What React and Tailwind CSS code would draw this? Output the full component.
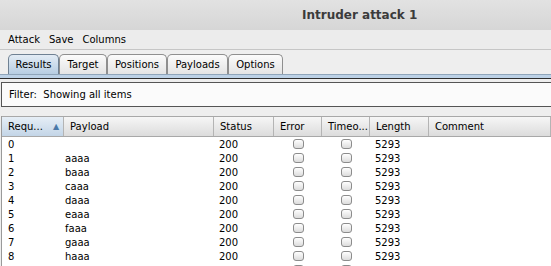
import React from 'react';

const tabs = ['Results', 'Target', 'Positions', 'Payloads', 'Options'];
const tabWidths = ['w-[51px]', 'w-[48px]', 'w-[60px]', 'w-[61px]', 'w-[55px]'];

const columns = [
  { label: 'Requ...', w: 'w-[62px]', sort: true },
  { label: 'Payload', w: 'w-[150px]' },
  { label: 'Status', w: 'w-[60px]' },
  { label: 'Error', w: 'w-[48px]' },
  { label: 'Timeo...', w: 'w-[48px]' },
  { label: 'Length', w: 'w-[59px]' },
  { label: 'Comment', w: 'flex-1' },
];

const rows = [
  ['0', ''],
  ['1', 'aaaa'],
  ['2', 'baaa'],
  ['3', 'caaa'],
  ['4', 'daaa'],
  ['5', 'eaaa'],
  ['6', 'faaa'],
  ['7', 'gaaa'],
  ['8', 'haaa'],
  ['9', 'iaaa'],
];

// small swing-style checkbox
const Check = () => (
  <span className="block w-[11px] h-[10px] rounded-[3px] border border-[#8c8c8c] bg-gradient-to-b from-white to-[#dcdcdc]" />
);

export default function App() {
  return (
    <div className="w-[551px] h-[266px] overflow-hidden bg-[#eeeeee] text-[10px] text-black font-['DejaVu_Sans',sans-serif] flex flex-col">
      {/* window title */}
      <div className="h-[30px] shrink-0 flex items-center pl-[302px] bg-gradient-to-b from-[#e2e2e2] to-[#d6d6d6]">
        <span className="text-[12px] font-bold text-[#3b3b3b]">Intruder attack 1</span>
      </div>

      {/* menu bar */}
      <div className="h-[20px] shrink-0 flex items-center gap-[9px] pl-[8px] bg-[#ececec] border-b border-[#c6c6c6]">
        <span>Attack</span>
        <span>Save</span>
        <span>Columns</span>
      </div>

      {/* tabs */}
      <div className="h-[24px] shrink-0 flex items-end pl-[8px]">
        {tabs.map((t, i) => (
          <div
            key={t}
            className={`${tabWidths[i]} h-[20px] flex items-center justify-center rounded-t-[5px] border border-b-0 ${
              i === 0
                ? 'border-[#6f8193] bg-gradient-to-b from-[#e3ecf5] to-[#b7cde2]'
                : 'border-[#8f8f8f] bg-gradient-to-b from-[#fbfbfb] to-[#e4e4e4]'
            }`}
          >
            {t}
          </div>
        ))}
      </div>
      <div className="h-[4px] shrink-0 bg-[#bcd1e6] border-t border-[#8fa5ba]" />
      <div className="h-px shrink-0 bg-[#2e2e2e]" />

      {/* filter */}
      <div className="mt-[3px] ml-[1px] h-[25px] shrink-0 flex items-center pl-[7px] bg-[#fbfbfb] border border-r-0 border-[#555555]">
        Filter:&nbsp; Showing all items
      </div>

      {/* table */}
      <div className="mt-[9px] flex-1 flex flex-col bg-white border-l border-[#9a9a9a] ml-[1px]">
        <div className="h-[21px] shrink-0 flex bg-gradient-to-b from-[#f6f6f6] to-[#dcdcdc] border-y border-[#a8a8a8]">
          {columns.map((c) => (
            <div
              key={c.label}
              className={`${c.w} shrink-0 flex items-center pl-[6px] border-r border-[#b4b4b4] ${c.sort ? 'bg-gradient-to-b from-[#e6eef6] to-[#c3d5e7]' : ''}`}
            >
              <span>{c.label}</span>
              {c.sort && <span className="ml-[10px] text-[8px] text-[#4a78a8]">▲</span>}
            </div>
          ))}
        </div>
        {rows.map(([n, p]) => (
          <div key={n} className="h-[14px] shrink-0 flex items-center">
            <div className="w-[62px] shrink-0 pl-[6px]">{n}</div>
            <div className="w-[150px] shrink-0 pl-[1px]">{p}</div>
            <div className="w-[60px] shrink-0 pl-[5px]">200</div>
            <div className="w-[48px] shrink-0 flex justify-center"><Check /></div>
            <div className="w-[48px] shrink-0 flex justify-center"><Check /></div>
            <div className="w-[59px] shrink-0 pl-[5px]">5293</div>
            <div className="flex-1" />
          </div>
        ))}
      </div>
    </div>
  );
}
